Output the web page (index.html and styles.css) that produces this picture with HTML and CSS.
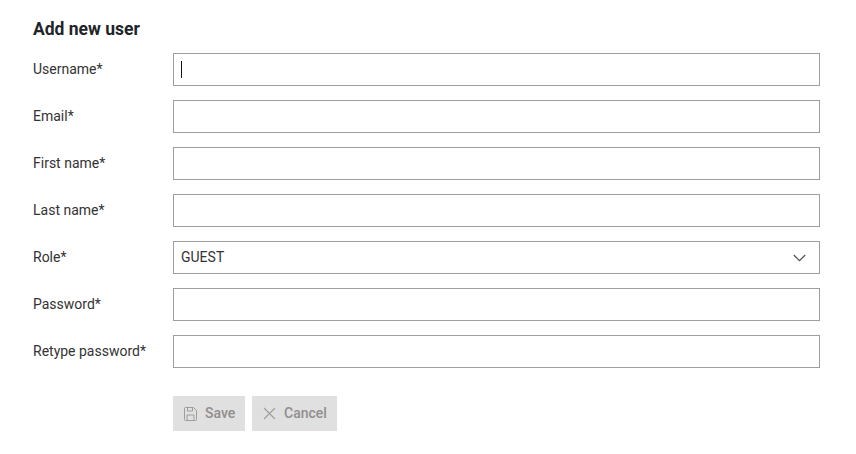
FILE: index.html
```html
<!DOCTYPE html>
<html lang="en">
<head>
<meta charset="utf-8">
<title>Add new user</title>
<link rel="stylesheet" href="styles.css">
</head>
<body>
<main class="page">
  <h1 class="title">Add new user</h1>
  <form class="form">
    <div class="row"><label class="label">Username*</label><div class="field"><span class="caret"></span></div></div>
    <div class="row"><label class="label">Email*</label><div class="field"></div></div>
    <div class="row"><label class="label">First name*</label><div class="field"></div></div>
    <div class="row"><label class="label">Last name*</label><div class="field"></div></div>
    <div class="row"><label class="label">Role*</label>
      <div class="field select"><span class="value">GUEST</span>
        <svg class="chevron" width="13" height="8" viewBox="0 0 13 8"><path d="M.8 1l5.700 5.700L12.200 1" fill="none" stroke="#555" stroke-width="1.3"/></svg>
      </div>
    </div>
    <div class="row"><label class="label">Password*</label><div class="field"></div></div>
    <div class="row"><label class="label">Retype password*</label><div class="field"></div></div>
    <div class="actions">
      <button type="button" class="btn save">
        <svg width="13" height="14" viewBox="0 0 13 14" fill="none" stroke="#a09c9c" stroke-width="1"><path d="M1.500.5h8l3 3v9a1 1 0 0 1-1 1h-10a1 1 0 0 1-1-1v-11a1 1 0 0 1 1-1z"/><path d="M3.500.5v3.500h5V.5"/><path d="M3 13.500V8h7v5.500"/></svg>
        <span class="btn-text">Save</span>
      </button>
      <button type="button" class="btn cancel">
        <svg width="13" height="13" viewBox="0 0 13 13" fill="none" stroke="#a09c9c" stroke-width="1.1"><path d="M1 1l11 11M12 1L1 12"/></svg>
        <span class="btn-text">Cancel</span>
      </button>
    </div>
  </form>
</main>
</body>
</html>
```
FILE: styles.css
```css
* { box-sizing: border-box; }
html, body { margin: 0; background: #fff; }
body { font-family: Roboto, "Liberation Sans", sans-serif; color: #333; font-size: 14px; }
.page { padding: 19px 36px 0 33px; }
.title { margin: 0 0 13px; font-size: 17.5px; line-height: 21px; font-weight: 700; color: #212529; }
.form { display: flex; flex-direction: column; gap: 14px; }
.row { display: flex; align-items: center; height: 33px; }
.label { width: 140px; flex: none; font-size: 14px; line-height: 20px; margin-top: -2px; color: #333; }
.field { flex: 1; height: 33px; border: 1px solid #9e9e9e; background: #fff; display: flex; align-items: center; padding: 0 7px; }
.caret { width: 1px; height: 17px; background: #111; }
.select { justify-content: space-between; padding-right: 13px; }
.value { font-size: 14px; color: #333; margin-top: -1px; }
.actions { display: flex; gap: 7px; margin: 14px 0 0 140px; }
.btn { height: 35px; width: 72px; border: 0; background: #e0e0e0; color: #928e8e; display: flex; align-items: center; gap: 8px; padding: 0 0 0 11px; font: 500 14px Roboto, "Liberation Sans", sans-serif; }
.cancel { width: 85px; }
.btn-text { margin-top: -2px; }
```
